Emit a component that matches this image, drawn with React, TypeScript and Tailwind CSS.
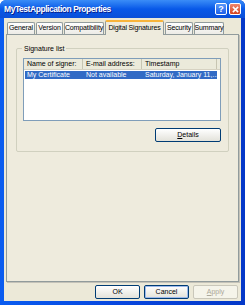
import React from 'react';

const font = { fontFamily: '"Liberation Sans", Arial, sans-serif' };

function Tab({ label, width, active }: { label: string; width: string; active?: boolean }) {
  if (active) {
    return (
      <div
        className={
          'relative z-10 -mb-px flex h-[15px] items-center justify-center whitespace-nowrap rounded-t-[2px] border-x border-t-[2px] border-x-[#919B9C] border-t-[#F8B43A] bg-[#EEEBDD] text-[7px] tracking-[-0.15px] text-black ' +
          width
        }
      >
        {label}
      </div>
    );
  }
  return (
    <div
      className={
        'flex h-[12px] items-center justify-center whitespace-nowrap rounded-t-[2px] border-x border-t border-[#919B9C] bg-gradient-to-b from-white to-[#ECEBE6] text-[7px] tracking-[-0.15px] text-black ' +
        width
      }
    >
      {label}
    </div>
  );
}

function XpButton({ label, disabled, focused }: { label: React.ReactNode; disabled?: boolean; focused?: boolean }) {
  return (
    <div
      className={
        'flex h-[14px] w-[45px] items-center justify-center rounded-[2px] border text-[7px] ' +
        (disabled
          ? 'border-[#C9C7BA] bg-[#F5F4EA] text-[#ACA899]'
          : focused
          ? 'border-[#003C74] bg-gradient-to-b from-white to-[#E3E2DA] text-black shadow-[inset_0_0_0_1px_#9DB9EB]'
          : 'border-[#003C74] bg-gradient-to-b from-white to-[#E3E2DA] text-black')
      }
    >
      {label}
    </div>
  );
}

export default function App() {
  return (
    <div style={font} className="flex h-[305px] w-[245px] flex-col overflow-hidden rounded-t-[6px] bg-gradient-to-r from-[#0A5CF0] via-[#0846DE] to-[#0438C8]">
      {/* title bar */}
      <div className="flex h-[18px] shrink-0 items-center bg-gradient-to-b from-[#3A8CF7] via-[#0858E8] to-[#0A4FD8] pl-[4px] pr-[4px]">
        <span className="flex-1 whitespace-nowrap text-[8.5px] font-bold tracking-[-0.45px] text-white [text-shadow:1px_1px_0_#0A1E8C]">
          MyTestApplication Properties
        </span>
        <div className="flex gap-[2px]">
          <div className="flex h-[12px] w-[12px] items-center justify-center rounded-[2px] border border-white bg-gradient-to-b from-[#5A98FA] to-[#1D5FE8] text-[9px] font-bold leading-none text-white">
            ?
          </div>
          <div className="flex h-[12px] w-[12px] items-center justify-center rounded-[2px] border border-white bg-gradient-to-b from-[#F0866B] to-[#D5441F]">
            <svg width="7" height="7" viewBox="0 0 8 8">
              <path d="M1 1L7 7M7 1L1 7" stroke="white" strokeWidth="1.7" />
            </svg>
          </div>
        </div>
      </div>

      {/* client */}
      <div className="mx-[4px] mb-[4px] flex flex-1 flex-col bg-[#ECE9D8] px-[2px]">
        <div className="mt-[2px] flex items-end gap-[1px] pl-[1px]">
          <Tab label="General" width="w-[28px]" />
          <Tab label="Version" width="w-[27px]" />
          <Tab label="Compatibility" width="w-[40px]" />
          <Tab label="Digital Signatures" width="w-[59px]" active />
          <Tab label="Security" width="w-[28px]" />
          <Tab label="Summary" width="w-[30px]" />
        </div>

        <div className="flex h-[248px] flex-col border border-[#919B9C] bg-[#EEEBDD] px-[9px] pt-[13px] shadow-[1px_1px_0_#C4C2B8]">
          <div className="relative flex h-[104px] flex-col rounded-[2px] border border-[#D0D0BF] pl-[6px] pr-[7px] pt-[9px]">
            <span className="absolute left-[5px] top-[-5px] bg-[#EEEBDD] px-[2px] text-[7px] leading-[9px] text-black">
              Signature list
            </span>
            <div className="flex h-[63px] flex-col border border-[#7F9DB9] bg-white">
              <div className="flex h-[11px] shrink-0 border-b border-[#D6D2C2] bg-[#EBEADB] text-[7px] text-black">
                <div className="flex w-[59px] items-center border-r border-[#C7C5B2] pl-[3px]">Name of signer:</div>
                <div className="flex w-[59px] items-center border-r border-[#C7C5B2] pl-[3px]">E-mail address:</div>
                <div className="flex w-[75px] items-center border-r border-[#C7C5B2] pl-[3px]">Timestamp</div>
                <div className="flex-1" />
              </div>
              <div className="ml-[1px] mt-[1px] flex h-[8px] w-[192px] items-center whitespace-nowrap bg-[#316AC5] text-[7px] text-white">
                <div className="w-[58px] pl-[2px]">My Certificate</div>
                <div className="w-[59px] pl-[3px]">Not available</div>
                <div className="w-[75px] pl-[3px]">Saturday, January 11,...</div>
              </div>
            </div>
            <div className="mt-[7px] flex justify-end">
              <div className="flex h-[14px] w-[66px] items-center justify-center rounded-[2px] border border-[#003C74] bg-gradient-to-b from-white to-[#E3E2DA] text-[7px] text-black">
                <span className="underline">D</span>etails
              </div>
            </div>
          </div>
        </div>

        <div className="mt-[3px] flex justify-end gap-[4px] pr-[1px]">
          <XpButton label="OK" />
          <XpButton label="Cancel" focused />
          <XpButton label={<><span className="underline">A</span>pply</>} disabled />
        </div>
      </div>
    </div>
  );
}
